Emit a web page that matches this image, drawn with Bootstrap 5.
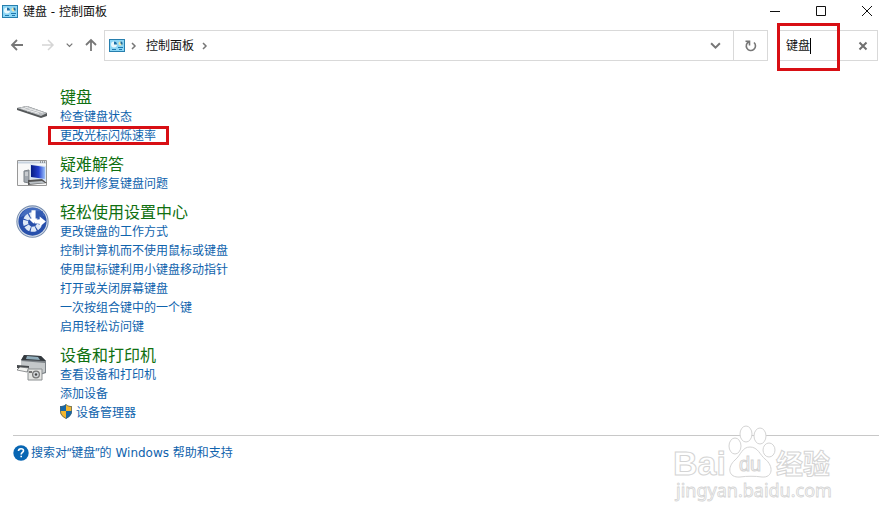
<!DOCTYPE html>
<html lang="zh-CN">
<head>
<meta charset="utf-8">
<meta name="viewport" content="width=device-width, initial-scale=1">
<title>键盘 - 控制面板</title>
<link rel="stylesheet" href="https://cdn.jsdelivr.net/npm/bootstrap@5.3.0/dist/css/bootstrap.min.css">
<style>
body{font-size:12px;line-height:19px;color:#111;background:#fff}
body,input{font-family:"Noto Sans CJK SC",sans-serif}
svg{display:block;flex:none}
.tool{border:0;background:none;padding:0;display:flex;align-items:center;justify-content:center;color:#777;flex:none}
.title-bar{height:24px;padding:0 6px 2px 2px}
.title-bar h1{font-size:12px;line-height:22px;margin-left:5px}
.latin{font-family:"DejaVu Sans",sans-serif;line-height:1}
.window-buttons{gap:34px}
.nav-row{padding:6px 1px 0 3px}
.nav-row .tool{height:30px}
.w-arrow{width:27px}.w-small{width:16px}
.field{height:31px;border:1px solid #d9d9d9}
.crumb{color:#111;text-decoration:none;padding-bottom:2px}
.chevron{margin:0 9px 0 6px}
.refresh{width:34px;border-left:1px solid #d9d9d9!important}
.search{width:100px;margin-left:10px}
.search input{border:0;outline:0;padding:0 0 2px 7px;width:70px;font-size:12px;color:#111;background:none}
.caret{position:absolute;left:31px;top:7px;width:1px;height:16px;background:#000}
.search-mark{position:absolute;left:-2px;top:-8px;width:63px;height:48px;border:3px solid #d80f14;pointer-events:none}
.results{padding:26px 16px 14px;gap:10px}
.task-icon{width:32px;margin:1px 12px 0 0;padding-top:8px}
.results h2{font-size:16px;line-height:19px;color:#107010;margin:0;font-weight:400}
.results a,.help a{color:#0f63ad;text-decoration:none}
.results a:hover,.help a:hover{text-decoration:underline}
.results li{height:19px}
.marked{position:relative}
.marked::after{content:"";position:absolute;left:-12px;right:-13px;top:1px;height:19px;border:3px solid #d80f14;pointer-events:none}
.help{margin-left:13px;border-top:1px solid #c8c8c8;padding-top:7px}
.help a{gap:2px}
.help .phrase{font-family:"Noto Sans","Noto Sans CJK SC",sans-serif}
.watermark{position:absolute;right:45px;top:-11px;pointer-events:none}
.watermark text{font-family:"Liberation Sans","Noto Sans CJK SC",sans-serif}
.watermark .site{font-family:"Noto Sans",sans-serif}
</style>
<script src="https://cdn.jsdelivr.net/npm/bootstrap@5.3.0/dist/js/bootstrap.bundle.min.js"></script>
</head>
<body class="min-vh-100">
<svg width="0" height="0" class="position-absolute" aria-hidden="true">
<symbol id="panel" viewBox="0 0 16 13"><path fill="#277fae" d="M0 0h16v13H0z"/><path fill="#8cd6f5" d="M1 1h14v11H1z"/><circle cx="5" cy="5.500" r="3" fill="#e9f8fc"/><path d="M5 5.500V2.500a3 3 0 0 1 3 3z" fill="#1c70a8"/><circle cx="11.500" cy="4.500" r="2" fill="#f0e7ae"/><path d="M11.500 4.500v-2a2 2 0 0 1 1.500 3.500z" fill="#1b6da5"/><path d="M3 10.500h4M9 8.500h5M10 10.500h3" stroke="#2078ad"/></symbol>
<symbol id="down" viewBox="0 0 10 8"><path d="m1 2 4 4 4-4" fill="none" stroke="currentColor" stroke-width="1.800"/></symbol>
<symbol id="right" viewBox="0 0 6 8"><path d="m1 1 3 3-3 3" fill="none" stroke="#777" stroke-width="1.500"/></symbol>
</svg>
<header>
<div class="title-bar d-flex align-items-center">
<svg width="16" height="13"><use href="#panel"/></svg>
<h1 class="fw-normal mb-0 me-auto">键盘<span class="latin"> - </span>控制面板</h1>
<div class="window-buttons d-flex">
<button class="tool" aria-label="最小化"><svg width="12" height="12"><path d="M1 6.500h10" stroke="#111"/></svg></button>
<button class="tool" aria-label="最大化"><svg width="12" height="12"><path d="M1.500 1.500h9v9h-9z" fill="none" stroke="#111"/></svg></button>
<button class="tool" aria-label="关闭"><svg width="12" height="12"><path d="m1 1 10 10M11 1 1 11" stroke="#111"/></svg></button>
</div>
</div>
<nav class="nav-row d-flex" aria-label="导航">
<button class="tool w-arrow" aria-label="后退"><svg width="14" height="12"><path d="M13 6H2M7 1 2 6l5 5" fill="none" stroke="#777" stroke-width="1.800"/></svg></button>
<button class="tool w-arrow ms-1" aria-label="前进"><svg width="14" height="12"><path d="M1 6h11M7 1l5 5-5 5" fill="none" stroke="#d5d5d5" stroke-width="1.500"/></svg></button>
<button class="tool w-small" aria-label="最近位置"><svg width="7" height="6"><use href="#down"/></svg></button>
<button class="tool w-arrow" aria-label="向上"><svg width="12" height="14"><path d="M6 13V2M1 7l5-5 5 5" fill="none" stroke="#777" stroke-width="1.800"/></svg></button>
<div class="field flex-grow-1 d-flex align-items-center">
<svg class="ms-1" width="16" height="13" style=""><use href="#panel"/></svg>
<svg class="chevron" width="6" height="8"><use href="#right"/></svg>
<a href="#" class="crumb">控制面板</a>
<svg class="ms-2 me-auto" width="6" height="8"><use href="#right"/></svg>
<button class="tool w-arrow me-1" aria-label="展开地址"><svg width="11" height="9"><use href="#down"/></svg></button>
<button class="tool refresh" aria-label="刷新"><svg width="12" height="13"><path d="M4 2.700A4.600 4.600 0 1 0 9 3.500M4.500 6.500V2.300H.5" fill="none" stroke="#777" stroke-width="1.600"/></svg></button>
</div>
<div class="search field position-relative d-flex">
<input type="text" value="键盘" aria-label="搜索控制面板"><span class="caret"></span>
<button class="tool w-arrow" aria-label="清除"><svg width="10" height="10"><path d="m1.500 1.500 7 7m0-7-7 7" stroke="#707070" stroke-width="2"/></svg></button>
<span class="search-mark"></span>
</div>
</nav>
</header>
<main>
<div class="results d-flex flex-column">
<section class="d-flex">
<div class="task-icon"><svg width="32" height="30" viewBox="0 0 32 30"><path d="m1 12 10-2 20 7v3l-6 2L1 14z" fill="#55585a"/><path d="m1 12 10-2 20 7-6 3z" fill="#b9bdc0"/><path d="m5 12 18 5.500m-14-6.500 18 6M7 13l5-2m-1 4 5-2m-1 3 5-2m-1 3 5-2" stroke="#eee" stroke-width=".8"/></svg></div>
<div><h2>键盘</h2><ul class="list-unstyled mb-0"><li><a href="#">检查键盘状态</a></li><li><a href="#" class="marked d-inline-block">更改光标闪烁速率</a></li></ul></div>
</section>
<section class="d-flex">
<div class="task-icon pt-1"><svg width="32" height="28" viewBox="0 0 32 28"><defs><linearGradient id="screen"><stop stop-color="#071c81"/><stop offset=".55" stop-color="#2440cf"/><stop offset="1" stop-color="#9bc0fa"/></linearGradient></defs><path d="M1.500 1.500h29v25h-29z" fill="#f8f8f8" stroke="#989898"/><path d="M2 3.500h28" stroke="#c8d3df" stroke-width="2"/><path d="M24 3h1m1 0h1m1 0h1" stroke="#555"/><path d="m8 12 5-1v13l-5-1z" fill="#a2a8af" stroke="#7d8389"/><path d="M9 14h3m-3 2h3" stroke="#eee"/><path d="m14 5 16 2v15l-16-2z" fill="#d7e4f3"/><path d="m15 6 14 2v12l-14-2z" fill="url(#screen)"/><path d="m12 21 14-1 5 4-19 2z" fill="#555"/><path d="m13 23 13-1 3 2-15 1z" fill="#bbc1c6"/></svg></div>
<div><h2>疑难解答</h2><ul class="list-unstyled mb-0"><li><a href="#">找到并修复键盘问题</a></li></ul></div>
</section>
<section class="d-flex">
<div class="task-icon pt-0"><svg width="33" height="35" viewBox="0 0 32 34"><circle cx="16" cy="18" r="15.200" fill="#d9e0ea" stroke="#788eaf"/><circle cx="16" cy="18" r="13.700" fill="#2850ab"/><path d="M4 14a12.500 12.500 0 0 1 24-1c-6-3-17-3-24 1z" fill="#6088d1" opacity=".5"/><circle cx="16" cy="18.500" r="7" fill="none" stroke="#dfe9f7" stroke-width="5" stroke-dasharray="4.500 1" transform="rotate(20 16 19)"/><path d="M18 8h8v8h-8z" fill="#3159b0"/><path d="M15 7h4v8h2l-4 5-5-5h3z" fill="#fff"/><path d="M18 16h5v-3l6 5-6 5v-3h-5z" fill="#fff"/></svg></div>
<div><h2>轻松使用设置中心</h2><ul class="list-unstyled mb-0"><li><a href="#">更改键盘的工作方式</a></li><li><a href="#">控制计算机而不使用鼠标或键盘</a></li><li><a href="#">使用鼠标键利用小键盘移动指针</a></li><li><a href="#">打开或关闭屏幕键盘</a></li><li><a href="#">一次按组合键中的一个键</a></li><li><a href="#">启用轻松访问键</a></li></ul></div>
</section>
<section class="d-flex">
<div class="task-icon"><svg width="32" height="28" viewBox="0 0 32 28"><path d="m8 1 17 1 5 5v12l-6 2-19-5V7z" fill="#7c8287"/><path d="m8 1 17 1 5 5-25-1z" fill="#34393e"/><path d="m11 2 11 1 2 3-14-1z" fill="#8fabb9"/><path d="m5 7 24 2v9l-5 2-19-6z" fill="#c4c8ca"/><path d="m1 11 12 1v4L1 14z" fill="#45494c"/><path d="m4 13 9 1-2 4-10-2z" fill="#f0f1ef" stroke="#686b6e" stroke-width=".7"/><path d="M12 15h14v11H12z" fill="#e3e4e2" stroke="#8c9092"/><path d="M13 17h3v2h-3z" fill="#777"/><circle cx="20" cy="20.500" r="4" fill="#777"/><circle cx="20" cy="20.500" r="2.700" fill="#d1d5d8"/><circle cx="20" cy="20.500" r="1.200" fill="#444"/></svg></div>
<div><h2>设备和打印机</h2><ul class="list-unstyled mb-0"><li><a href="#">查看设备和打印机</a></li><li><a href="#">添加设备</a></li><li><a href="#" class="d-flex align-items-center"><svg class="me-1 ms-n1" width="12" height="15" viewBox="0 0 14 15" preserveAspectRatio="none" aria-hidden="true"><defs><clipPath id="shield"><path d="M7 0c2 2 4 2 7 2v5c0 4-3 6-7 8-4-2-7-4-7-8V2c3 0 5 0 7-2z"/></clipPath></defs><g clip-path="url(#shield)"><path fill="#1768a8" d="M0 0h7v7H0zM7 7h7v8H7z"/><path fill="#f4b72e" d="M7 0h7v7H7zM0 7h7v8H0z"/></g><path d="M7 .5c2 1.800 4 2 6.500 2V7c0 4-3 5.500-6.500 7.400C3.500 12.500.5 11 .5 7V2.500c2.500 0 4.500-.2 6.500-2z" fill="none" stroke="#456273" stroke-width=".8"/></svg>设备管理器</a></li></ul></div>
</section>
</div>
<footer class="help position-relative">
<a href="#" class="d-inline-flex align-items-center"><svg width="16" height="16" viewBox="0 0 16 16" aria-hidden="true"><circle cx="8" cy="8" r="7.700" fill="#0866b3"/><path d="M5.500 6c0-1.500 1-2.300 2.500-2.300s2.500.8 2.500 2c0 1.800-2.300 1.800-2.300 3.800m0 1.200v1.600" fill="none" stroke="#fff" stroke-width="1.600"/></svg><span class="phrase">搜索对“键盘”的<span class="latin"> Windows </span>帮助和支持</span></a>
<svg class="watermark" width="160" height="80" viewBox="0 0 160 80" role="img" aria-label="Baidu 经验">
<g fill="#fff" stroke="#d4d4d4" stroke-width="1"><path d="M76 22c8 0 10 8 15 12 9 7 8 19-3 18-7-1-15-1-22 0-12 1-13-10-5-17 6-5 7-13 15-13z"/><ellipse cx="61" cy="21" rx="6" ry="8"/><ellipse cx="72" cy="9" rx="6" ry="8"/><ellipse cx="86" cy="11" rx="6" ry="8"/><ellipse cx="95" cy="25" rx="6" ry="7"/></g>
<g fill="#fff" stroke="#d4d4d4" stroke-width="1"><text x="-1" y="50" font-size="34" font-weight="bold">Bai</text><text x="65" y="46" font-size="20">du</text><text x="102" y="49" font-size="27" font-weight="bold">经验</text><text class="site" x="2" y="72" font-size="18" stroke-width=".8">jingyan.baidu.com</text></g>
</svg>
</footer>
</main>
</body>
</html>
